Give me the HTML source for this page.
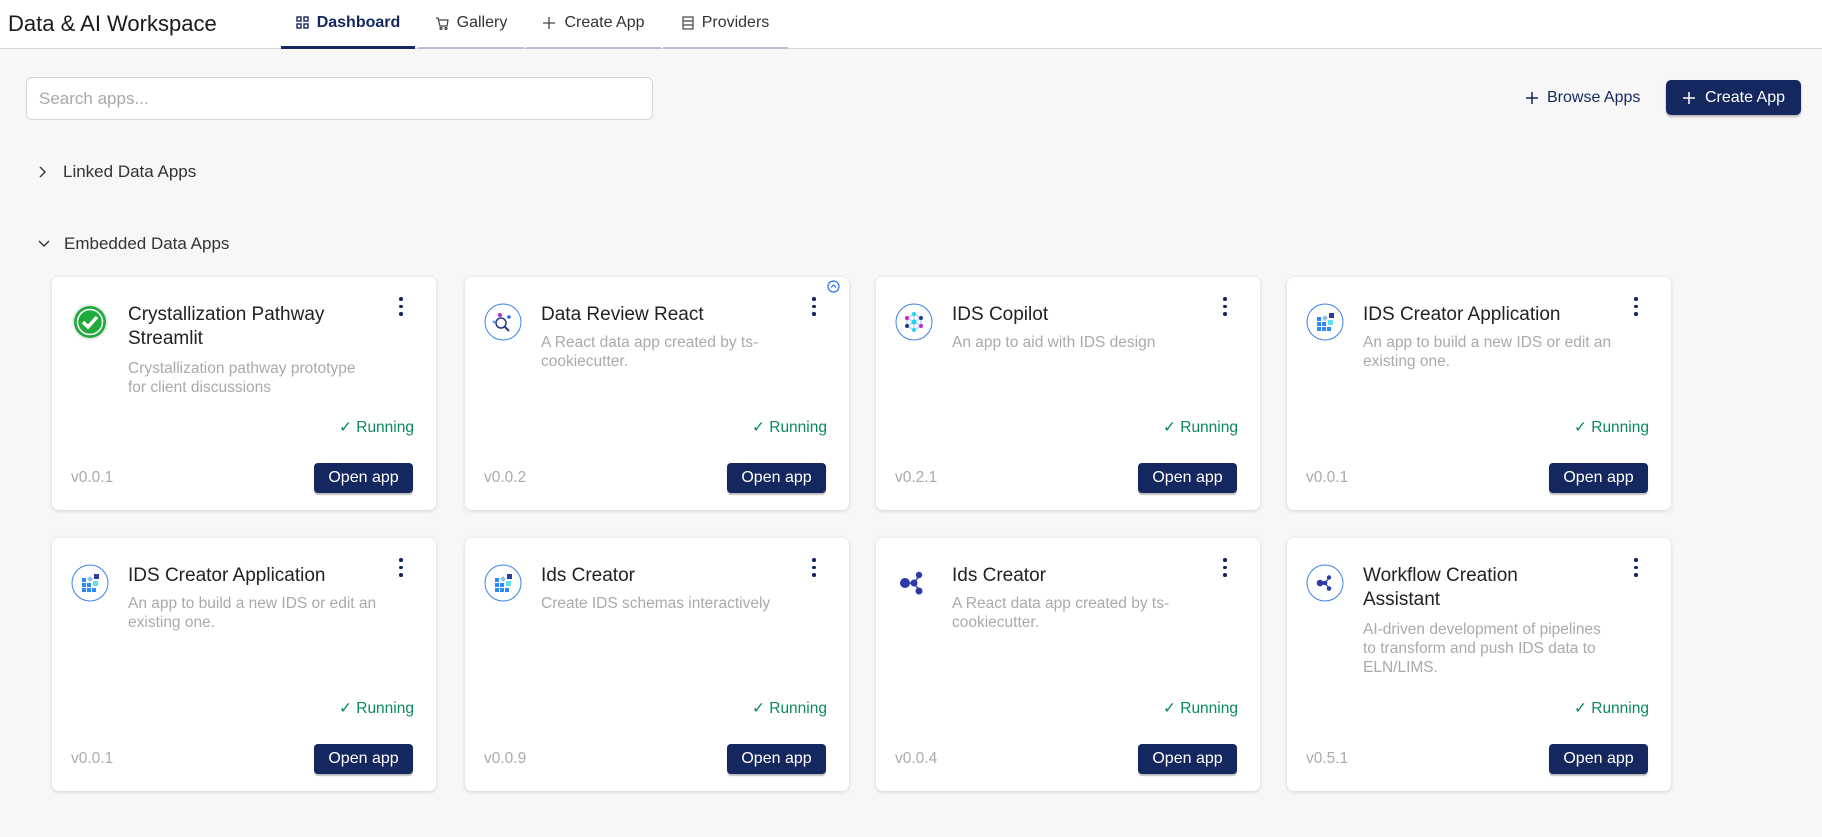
<!DOCTYPE html>
<html><head><meta charset="utf-8"><style>
*{box-sizing:border-box;margin:0;padding:0}
body{width:1822px;height:837px;background:#f7f7f7;font-family:"Liberation Sans",Arial,sans-serif;position:relative;overflow:hidden}
.hdr{position:absolute;left:0;top:0;width:1822px;height:49px;background:#fff;border-bottom:1px solid #d8d8d8}
.title{position:absolute;left:8px;top:11px;font-size:22px;color:#1a1a1a}
.tab{position:absolute;top:0;height:49px;border-bottom:2px solid #b8bfd6;font-size:16px;color:#333;display:flex;align-items:center;justify-content:center;gap:8px;padding-bottom:1px}
.tab.act{border-bottom:3px solid #14275e;color:#14275e;font-weight:bold}
.search{position:absolute;left:26px;top:77px;width:627px;height:43px;background:#fff;border:1px solid #d6d6d6;border-radius:6px;padding-left:12px;line-height:41px;color:#a8a8a8;font-size:17px}
.browse{position:absolute;left:1525px;top:89px;font-size:16px;color:#14275e;display:flex;align-items:center;gap:8px}
.cbtn{position:absolute;left:1666px;top:80px;width:135px;height:35px;background:#14275e;border-radius:5px;color:#fff;font-size:16px;display:flex;align-items:center;justify-content:center;gap:9px;box-shadow:0 2px 2px rgba(0,0,0,.25)}
.sec{position:absolute;left:38px;font-size:17px;color:#333;display:flex;align-items:center;gap:17px}
.card{position:absolute;width:384px;background:#fff;border-radius:7px;box-shadow:0 1px 4px rgba(0,0,0,.15)}
.card .ic{position:absolute;left:19px;top:26px;width:38px;height:38px}
.card .t{position:absolute;left:76px;top:26px;width:222px;font-size:19px;line-height:24px;color:#222}
.card .d{position:absolute;left:76px;width:290px;font-size:15.5px;line-height:19px;color:#aaa;white-space:nowrap}
.card .k{position:absolute;left:347px;top:20px;width:4px}
.card .k i{display:block;width:3.5px;height:3.5px;border-radius:50%;background:#14275e;margin-bottom:4px}
.card .r{position:absolute;right:22px;bottom:73px;font-size:15.5px;color:#0a8a5a}
.card .v{position:absolute;left:19px;bottom:23px;font-size:15.5px;color:#aaa}
.card .b{position:absolute;right:23px;bottom:17px;width:99px;height:30px;background:#14275e;color:#fff;border-radius:4px;font-size:16px;display:flex;align-items:center;justify-content:center;box-shadow:0 2px 1px rgba(0,0,0,.25)}
</style></head><body>
<div class="hdr">
<div class="title">Data &amp; AI Workspace</div>
<div class="tab act" style="left:281px;width:134px"><svg width="13" height="13" viewBox="0 0 13 13" fill="none" stroke="#14275e" stroke-width="1.4"><rect x="1" y="1" width="4" height="4"/><rect x="8" y="1" width="4" height="4"/><rect x="1" y="8" width="4" height="4"/><rect x="8" y="8" width="4" height="4"/></svg>Dashboard</div>
<div class="tab" style="left:418px;width:106px"><svg width="14" height="13" viewBox="0 0 14 13" fill="none" stroke="#444" stroke-width="1.2"><path d="M1 1h2l2 8h7l1-6H4"/><circle cx="6" cy="11.5" r="1"/><circle cx="11" cy="11.5" r="1"/></svg>Gallery</div>
<div class="tab" style="left:526px;width:135px"><svg width="14" height="14" viewBox="0 0 14 14" stroke="#444" stroke-width="1.3"><path d="M7 1v12M1 7h12"/></svg>Create App</div>
<div class="tab" style="left:663px;width:125px"><svg width="12" height="14" viewBox="0 0 12 14" fill="none" stroke="#444" stroke-width="1.2"><rect x="1" y="1" width="10" height="12"/><path d="M1 5h10M1 9h10"/></svg>Providers</div>
</div>
<div class="search">Search apps...</div>
<div class="browse"><svg width="14" height="14" viewBox="0 0 14 14" stroke="#14275e" stroke-width="1.5"><path d="M7 1v12M1 7h12"/></svg>Browse Apps</div>
<div class="cbtn"><svg width="14" height="14" viewBox="0 0 14 14" stroke="#fff" stroke-width="1.5"><path d="M7 1v12M1 7h12"/></svg>Create App</div>
<div class="sec" style="top:162px"><svg width="8" height="12" viewBox="0 0 8 12" fill="none" stroke="#333" stroke-width="1.4"><path d="M2 1l5 5-5 5"/></svg>Linked Data Apps</div>
<div class="sec" style="top:234px;gap:14px"><svg width="12" height="8" viewBox="0 0 12 8" fill="none" stroke="#333" stroke-width="1.4"><path d="M1 1l5 5 5-5"/></svg>Embedded Data Apps</div>

<svg width="0" height="0" style="position:absolute">
<defs>
<symbol id="ring" viewBox="0 0 38 38"><circle cx="19" cy="19" r="18" fill="#fff" stroke="#3b82e6" stroke-width="1"/></symbol>
<symbol id="grid" viewBox="0 0 38 38"><circle cx="19" cy="19" r="18" fill="#fff" stroke="#3b82e6" stroke-width="1"/><g fill="#2b8af7"><rect x="11" y="14" width="4" height="4"/><rect x="11" y="19" width="4" height="4"/><rect x="16" y="19" width="4" height="4"/><rect x="11" y="24" width="4" height="4"/><rect x="16" y="24" width="4" height="4"/><rect x="21" y="24" width="4" height="4"/></g><rect x="17" y="13" width="4" height="4" fill="#8bb9f5" transform="rotate(45 19 15)"/><rect x="23" y="10" width="5" height="5" fill="#2a3fa0"/><rect x="22" y="17" width="5" height="5" fill="#5ee0f5"/></symbol>
</defs></svg>

<!-- Row 1 -->
<div class="card" style="left:52px;top:277px;height:233px">
<svg class="ic" viewBox="0 0 38 38"><circle cx="19" cy="19" r="18" fill="#e8ece8"/><circle cx="19" cy="19" r="16" fill="#1faa3c"/><circle cx="19" cy="19" r="12.5" fill="none" stroke="#fff" stroke-width="1.5"/><path d="M12 19l5 5 9-10" fill="none" stroke="#fff" stroke-width="3.5"/></svg>
<div class="t">Crystallization Pathway Streamlit</div>
<div class="d" style="top:82px">Crystallization pathway prototype<br>for client discussions</div>
<div class="k"><i></i><i></i><i></i></div>
<div class="r">✓ Running</div><div class="v">v0.0.1</div><div class="b">Open app</div></div>

<div class="card" style="left:465px;top:277px;height:233px">
<svg class="ic" viewBox="0 0 38 38"><use href="#ring"/><circle cx="17" cy="20" r="5" fill="none" stroke="#1f3a8a" stroke-width="1.5"/><path d="M21 24l4 4" stroke="#1f3a8a" stroke-width="2"/><circle cx="16" cy="12" r="2" fill="#c026d3"/><circle cx="25" cy="14" r="1.8" fill="#2563eb"/><circle cx="10" cy="19" r="1.5" fill="#60a5fa"/></svg>
<svg style="position:absolute;left:362px;top:3px" width="13" height="13" viewBox="0 0 13 13" fill="none" stroke="#2b6ff0" stroke-width="1.2"><circle cx="6.5" cy="6.5" r="5.5"/><path d="M4 7.5l2.5-2.5 2.5 2.5"/></svg>
<div class="t">Data Review React</div>
<div class="d" style="top:56px">A React data app created by ts-<br>cookiecutter.</div>
<div class="k"><i></i><i></i><i></i></div>
<div class="r">✓ Running</div><div class="v">v0.0.2</div><div class="b">Open app</div></div>

<div class="card" style="left:876px;top:277px;height:233px">
<svg class="ic" viewBox="0 0 38 38"><use href="#ring"/><path d="M19 11L12 15 12 23 19 27 26 23 26 15Z M19 11L19 27 M12 15L26 23 M26 15L12 23" stroke="#93c5fd" stroke-width="1" fill="none"/><circle cx="19" cy="11" r="2" fill="#22d3ee"/><circle cx="19" cy="19" r="2.5" fill="#22d3ee"/><circle cx="19" cy="27" r="2" fill="#22d3ee"/><circle cx="12" cy="15" r="2" fill="#c026d3"/><circle cx="26" cy="15" r="2" fill="#1e3a8a"/><circle cx="12" cy="23" r="2" fill="#1e3a8a"/><circle cx="26" cy="23" r="2" fill="#c026d3"/></svg>
<div class="t">IDS Copilot</div>
<div class="d" style="top:56px">An app to aid with IDS design</div>
<div class="k"><i></i><i></i><i></i></div>
<div class="r">✓ Running</div><div class="v">v0.2.1</div><div class="b">Open app</div></div>

<div class="card" style="left:1287px;top:277px;height:233px">
<svg class="ic" viewBox="0 0 38 38"><use href="#grid"/></svg>
<div class="t">IDS Creator Application</div>
<div class="d" style="top:56px">An app to build a new IDS or edit an<br>existing one.</div>
<div class="k"><i></i><i></i><i></i></div>
<div class="r">✓ Running</div><div class="v">v0.0.1</div><div class="b">Open app</div></div>

<!-- Row 2 -->
<div class="card" style="left:52px;top:538px;height:253px">
<svg class="ic" viewBox="0 0 38 38"><use href="#grid"/></svg>
<div class="t">IDS Creator Application</div>
<div class="d" style="top:56px">An app to build a new IDS or edit an<br>existing one.</div>
<div class="k"><i></i><i></i><i></i></div>
<div class="r">✓ Running</div><div class="v">v0.0.1</div><div class="b">Open app</div></div>

<div class="card" style="left:465px;top:538px;height:253px">
<svg class="ic" viewBox="0 0 38 38"><use href="#grid"/></svg>
<div class="t">Ids Creator</div>
<div class="d" style="top:56px">Create IDS schemas interactively</div>
<div class="k"><i></i><i></i><i></i></div>
<div class="r">✓ Running</div><div class="v">v0.0.9</div><div class="b">Open app</div></div>

<div class="card" style="left:876px;top:538px;height:253px">
<svg class="ic" viewBox="0 0 38 38"><path d="M10 19h9M19 19l5-7M19 19l5 7" stroke="#2b3aa8" stroke-width="1.5"/><circle cx="10" cy="19" r="5" fill="#2b3aa8"/><circle cx="19" cy="19" r="3.5" fill="#2b3aa8"/><circle cx="24" cy="11" r="3.2" fill="#2b3aa8"/><circle cx="24" cy="27" r="3.5" fill="#2b3aa8"/></svg>
<div class="t">Ids Creator</div>
<div class="d" style="top:56px">A React data app created by ts-<br>cookiecutter.</div>
<div class="k"><i></i><i></i><i></i></div>
<div class="r">✓ Running</div><div class="v">v0.0.4</div><div class="b">Open app</div></div>

<div class="card" style="left:1287px;top:538px;height:253px">
<svg class="ic" viewBox="0 0 38 38"><use href="#ring"/><path d="M14 19h5M19 19l4-5M19 19l4 5" stroke="#2b3aa8" stroke-width="1.2"/><circle cx="14" cy="19" r="3.3" fill="#2b3aa8"/><circle cx="19" cy="19" r="2.3" fill="#2b3aa8"/><circle cx="23" cy="13.5" r="2.2" fill="#2b3aa8"/><circle cx="23" cy="24.5" r="2.3" fill="#2b3aa8"/></svg>
<div class="t">Workflow Creation Assistant</div>
<div class="d" style="top:82px">AI-driven development of pipelines<br>to transform and push IDS data to<br>ELN/LIMS.</div>
<div class="k"><i></i><i></i><i></i></div>
<div class="r">✓ Running</div><div class="v">v0.5.1</div><div class="b">Open app</div></div>
</body></html>
